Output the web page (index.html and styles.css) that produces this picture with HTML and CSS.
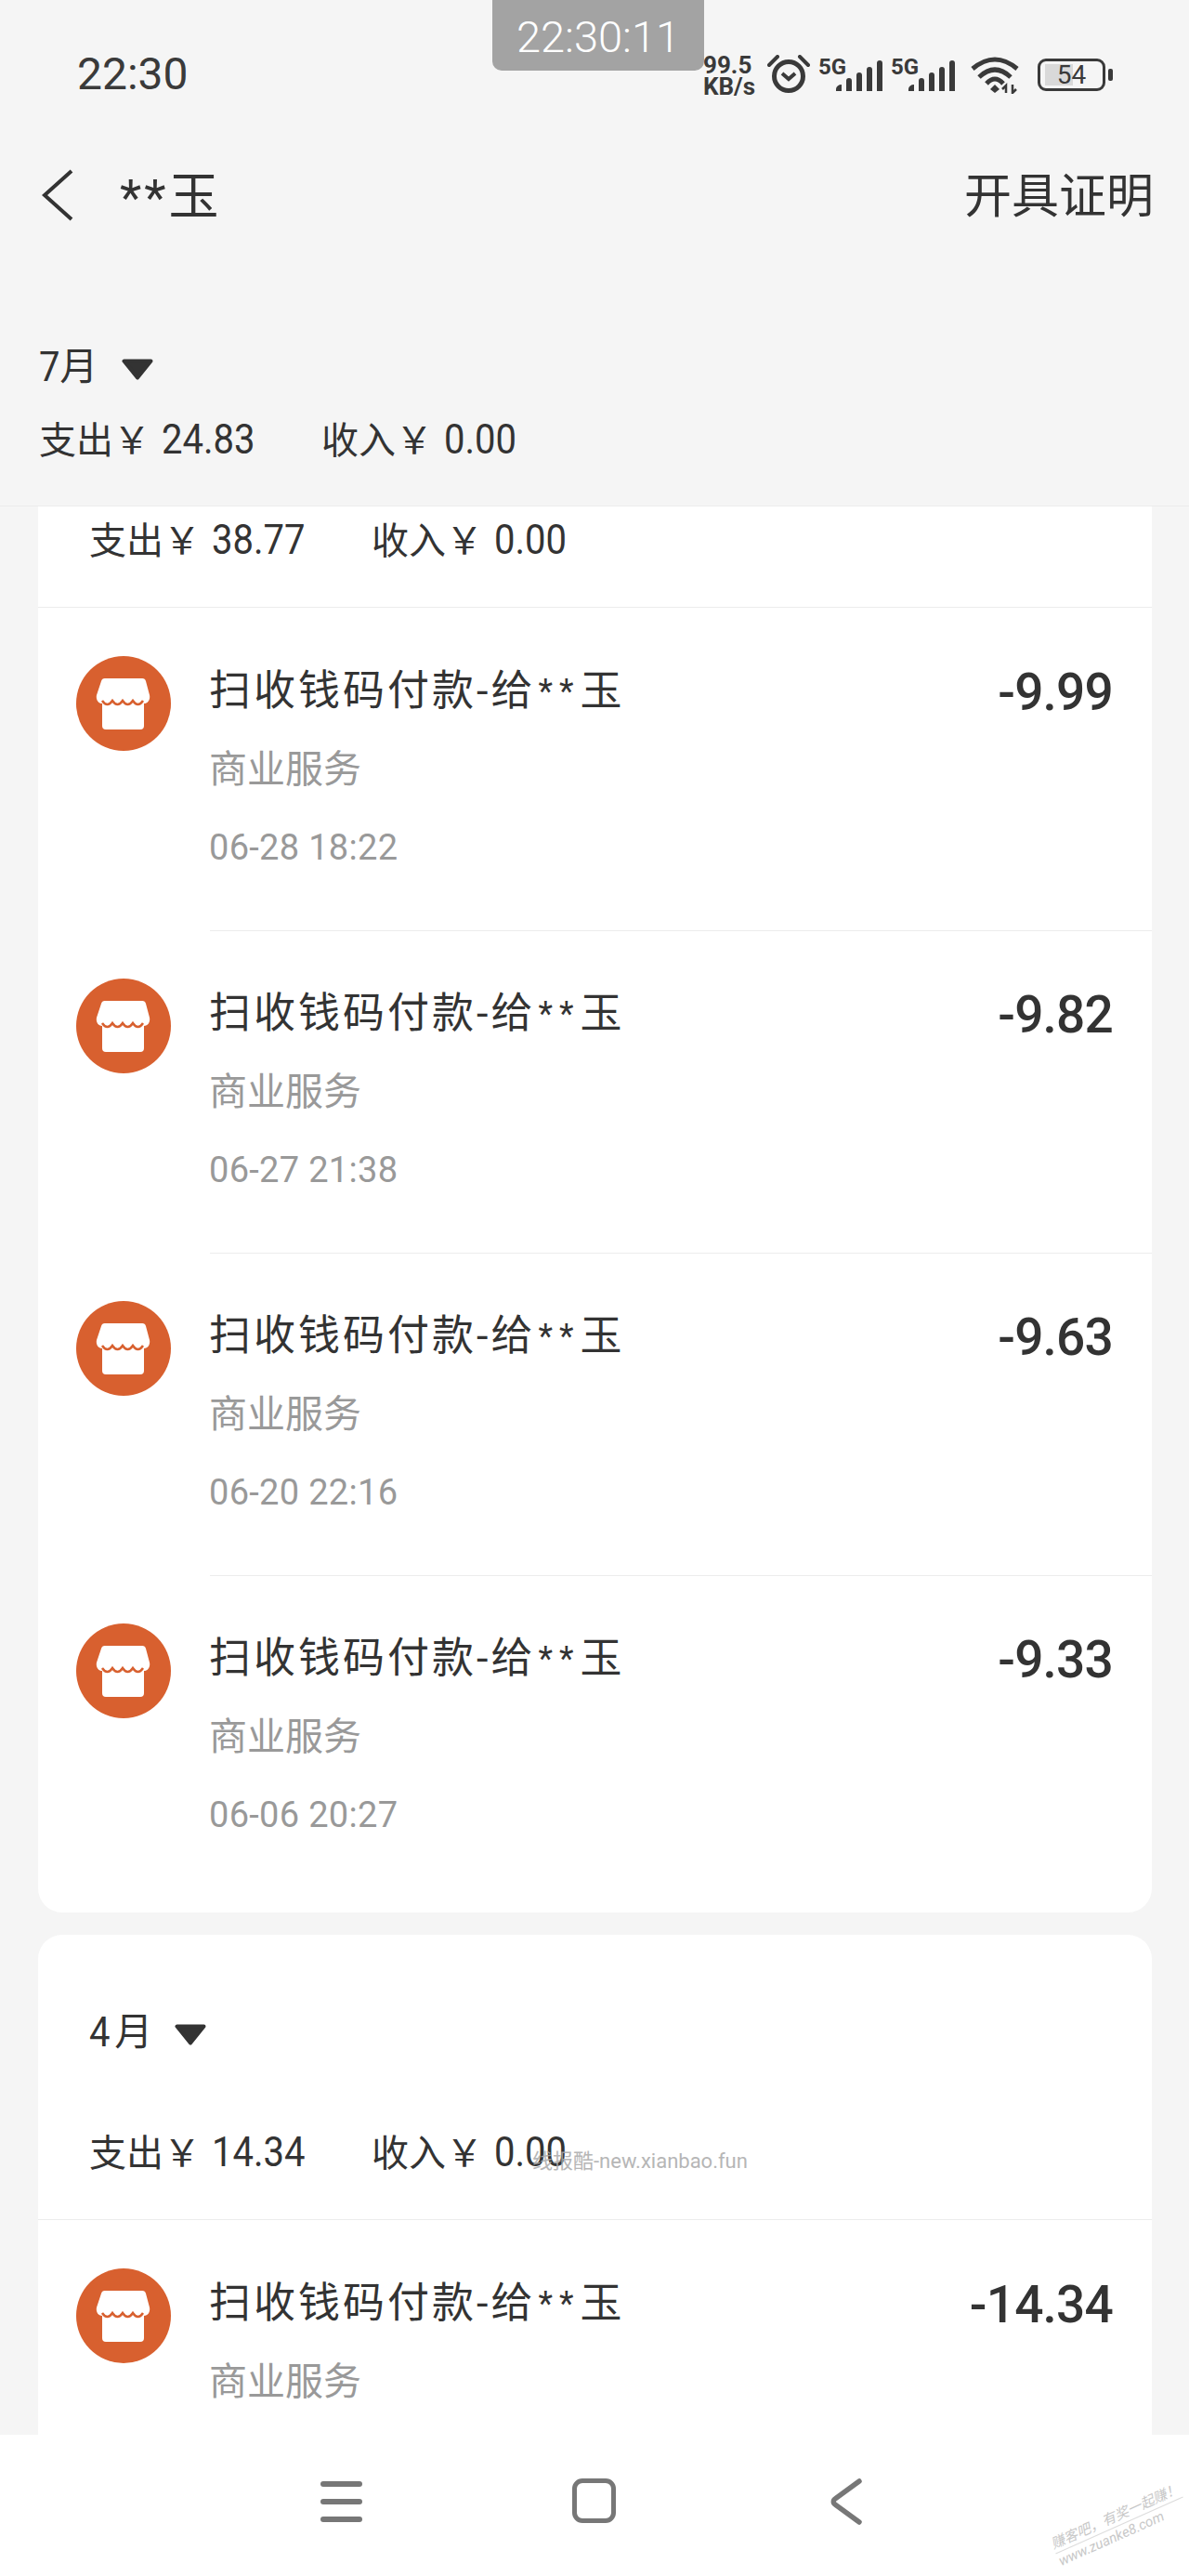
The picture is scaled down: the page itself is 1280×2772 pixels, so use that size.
FILE: index.html
```html
<!DOCTYPE html>
<html lang="zh-CN">
<head>
    <meta charset="UTF-8">
    <title>**玉</title>
    <link rel="stylesheet" href="styles.css">
</head>
<body>
<svg class="defs" width="0" height="0">
    <symbol id="shop" viewBox="0 0 102 102">
        <circle cx="51" cy="51" r="51" fill="#d8602f"/>
        <path d="M31 24H71a4 4 0 0 1 4 3l4 15c1 5-2 9-6 9v24a4 4 0 0 1-4 4H32a4 4 0 0 1-4-4V51c-4 0-7-4-6-9l5-15a4 4 0 0 1 4-3z" fill="#fff"/>
        <path d="M28 48q5.500 8 11 0q5.500 8 11 0q5.500 8 11 0q5.500 8 11 0" fill="none" stroke="#d8602f" stroke-width="2.500"/>
    </symbol>
    <symbol id="bars" viewBox="0 0 52 33">
        <path d="M1 33v-2a6 5 0 0 1 6-5v7zM12 33V22a3 3 0 0 1 6 0v11zM23 33V16a3 3 0 0 1 6 0v17zM34 33V10a3 3 0 0 1 6 0v23zM45 33V3a3 3 0 0 1 6 0v30z" fill="#3a3a3a"/>
    </symbol>
    <symbol id="tri" viewBox="0 0 34 23">
        <path d="M2.500 2.500h29L17 20.500z" fill="#333" stroke="#333" stroke-width="4" stroke-linejoin="round"/>
    </symbol>
</svg>
<div class="phone">
    <!-- status bar -->
    <div class="status">
        <span class="clock">22:30</span>
        <div class="status-icons">
            <div class="speed"><span>99.5</span><span>KB/s</span></div>
            <svg class="alarm" width="46" height="42" viewBox="0 0 46 42">
                <circle cx="23" cy="23" r="15.500" fill="none" stroke="#3a3a3a" stroke-width="5"/>
                <path d="M16 20l7 6 7-6" fill="none" stroke="#3a3a3a" stroke-width="4"/>
                <path d="M2 11L11 2M44 11L35 2" fill="none" stroke="#3a3a3a" stroke-width="4" stroke-linecap="round"/>
            </svg>
            <div class="net first-net">
                <span class="five-g">5G</span>
                <svg width="52" height="33"><use href="#bars"/></svg>
            </div>
            <div class="net">
                <span class="five-g">5G</span>
                <svg width="52" height="33"><use href="#bars"/></svg>
            </div>
            <svg class="wifi" width="56" height="42" viewBox="0 0 56 42">
                <path d="M3 15Q27-5 51 15M10 24Q27 8 44 24M18 31Q27 21 36 31" fill="none" stroke="#3a3a3a" stroke-width="5"/>
                <path d="M27 32l5 5-5 4-5-4z" fill="#3a3a3a"/>
                <path d="M39 41V33l-4 4M46 32v9l4-4" fill="none" stroke="#3a3a3a" stroke-width="2.500"/>
            </svg>
            <div class="battery">
                <div class="battery-box"><i class="battery-fill"></i><span>54</span></div>
                <i class="battery-nub"></i>
            </div>
        </div>
    </div>
    <div class="time-pill">22:30:11</div>

    <!-- title bar -->
    <div class="nav">
        <svg class="back" width="34" height="56" viewBox="0 0 34 56"><path d="M32 2L3 28l29 26" fill="none" stroke="#333" stroke-width="4"/></svg>
        <span class="title">**玉</span>
        <span class="cert">开具证明</span>
    </div>

    <!-- sticky month -->
    <div class="sticky-month">
        <div class="month"><span class="digit">7</span>月<svg class="tri" width="34" height="23"><use href="#tri"/></svg></div>
        <div class="summary"><span>支出<b>￥</b><span class="num">24.83</span></span><span>收入<b>￥</b><span class="num">0.00</span></span></div>
    </div>

    <div class="list">
        <div class="card card-cut">
            <div class="summary"><span>支出<b>￥</b><span class="num">38.77</span></span><span>收入<b>￥</b><span class="num">0.00</span></span></div>
            <div class="rows">
                <div class="row">
                    <svg class="shop" width="102" height="102"><use href="#shop"/></svg>
                    <div class="row-main">
                        <div class="row-title">扫收钱码付款-给<span class="stars">**</span>玉</div>
                        <div class="row-kind">商业服务</div>
                        <div class="row-date">06-28 18:22</div>
                    </div>
                    <div class="row-amount">-9.99</div>
                </div>
                <div class="row">
                    <svg class="shop" width="102" height="102"><use href="#shop"/></svg>
                    <div class="row-main">
                        <div class="row-title">扫收钱码付款-给<span class="stars">**</span>玉</div>
                        <div class="row-kind">商业服务</div>
                        <div class="row-date">06-27 21:38</div>
                    </div>
                    <div class="row-amount">-9.82</div>
                </div>
                <div class="row">
                    <svg class="shop" width="102" height="102"><use href="#shop"/></svg>
                    <div class="row-main">
                        <div class="row-title">扫收钱码付款-给<span class="stars">**</span>玉</div>
                        <div class="row-kind">商业服务</div>
                        <div class="row-date">06-20 22:16</div>
                    </div>
                    <div class="row-amount">-9.63</div>
                </div>
                <div class="row">
                    <svg class="shop" width="102" height="102"><use href="#shop"/></svg>
                    <div class="row-main">
                        <div class="row-title">扫收钱码付款-给<span class="stars">**</span>玉</div>
                        <div class="row-kind">商业服务</div>
                        <div class="row-date">06-06 20:27</div>
                    </div>
                    <div class="row-amount">-9.33</div>
                </div>
            </div>
        </div>

        <div class="card">
            <div class="month month-in"><span class="digit">4</span>月<svg class="tri" width="34" height="23"><use href="#tri"/></svg></div>
            <div class="summary"><span>支出<b>￥</b><span class="num">14.34</span></span><span>收入<b>￥</b><span class="num">0.00</span></span></div>
            <div class="rows">
                <div class="row">
                    <svg class="shop" width="102" height="102"><use href="#shop"/></svg>
                    <div class="row-main">
                        <div class="row-title">扫收钱码付款-给<span class="stars">**</span>玉</div>
                        <div class="row-kind">商业服务</div>
                    </div>
                    <div class="row-amount">-14.34</div>
                </div>
            </div>
        </div>
    </div>

    <!-- system nav -->
    <div class="sysnav">
        <div class="sys-menu"><i></i><i></i><i></i></div>
        <div class="sys-home"></div>
        <svg class="sys-back" width="34" height="50" viewBox="0 0 34 50"><path d="M31 3L5 22a3.500 3.500 0 0 0 0 6l26 19" fill="none" stroke="#777" stroke-width="5.500" stroke-linecap="round"/></svg>
    </div>

    <div class="mark-site">线报酷-new.xianbao.fun</div>
    <div class="mark-corner"><div class="mark-line">赚客吧，有奖一起赚！</div><div>www.zuanke8.com</div></div>
</div>
</body>
</html>
```

FILE: styles.css
```css
* {
    box-sizing: border-box;
}
body {
    margin: 0;
    font-family: Roboto, "Noto Sans CJK SC", sans-serif;
    color: #333;
}
i {
    display: block;
}
.defs {
    position: absolute;
}

.phone {
    position: relative;
    width: 1280px;
    height: 2772px;
    background: #f5f5f5;
    display: flex;
    flex-direction: column;
    overflow: hidden;
}

/* status bar */
.status {
    height: 110px;
    padding: 56px 82px 0 83px;
    display: flex;
    justify-content: space-between;
    color: #3a3a3a;
}
.clock {
    font-size: 48px;
    line-height: 48px;
}
.status-icons {
    display: flex;
    align-items: flex-start;
    margin-top: 3px;
}
.speed {
    width: 69px;
    display: flex;
    flex-direction: column;
    font-size: 26px;
    line-height: 23px;
    font-weight: 700;
}
.net {
    display: flex;
    width: 78px;
    position: relative;
    height: 42px;
}
.first-net {
    margin-left: 9px;
}
.five-g {
    font-size: 24px;
    line-height: 26px;
    font-weight: 700;
}
.net svg {
    position: absolute;
    left: 18px;
    top: 6px;
}
.wifi {
    margin-left: 7px;
}
.battery {
    display: flex;
    align-items: center;
    margin-left: 17px;
    margin-top: 4px;
}
.battery-box {
    position: relative;
    width: 73px;
    height: 35px;
    border: 3px solid #3a3a3a;
    border-radius: 9px;
    text-align: center;
    font-size: 28px;
    line-height: 29px;
}
.battery-box span {
    position: relative;
}
.battery-fill {
    position: absolute;
    left: 5px;
    top: 3px;
    bottom: 3px;
    width: 30px;
    background: #d9d9d9;
}
.battery-nub {
    width: 5px;
    height: 13px;
    margin-left: 3px;
    background: #3a3a3a;
    border-radius: 2px;
}
.time-pill {
    position: absolute;
    left: 530px;
    top: 0;
    width: 228px;
    height: 76px;
    background: #a3a3a3;
    border-radius: 0 0 10px 10px;
    color: #fff;
    text-align: center;
    font-size: 47px;
    font-weight: 300;
    line-height: 80px;
}

/* title bar */
.nav {
    height: 150px;
    margin-top: 25px;
    padding: 0 38px 0 45px;
    display: flex;
    align-items: center;
}
.title {
    margin: 0 0 6px 50px;
    font-size: 54px;
    letter-spacing: 3px;
}
.cert {
    margin: 0 0 6px auto;
    font-size: 51px;
}

/* month */
.sticky-month {
    height: 260px;
    padding: 82px 0 0 42px;
    border-bottom: 1px solid #ececec;
}
.month {
    display: flex;
    align-items: center;
    font-size: 41px;
    line-height: 56px;
}
/* the digits in the month heads are narrower than Roboto */
.num,
.digit {
    display: inline-block;
    font-size: 45px;
    transform: scaleX(.89);
    transform-origin: 0 50%;
}
.num {
    margin-right: -12px;
}
.digit {
    margin-right: -3px;
}
.tri {
    margin: 4px 0 0 26px;
}
.summary {
    display: flex;
    gap: 71px;
    font-size: 40px;
    line-height: 56px;
    margin-top: 22px;
}
.summary b {
    font-weight: 400;
    margin-right: 12px;
}

/* list */
.list {
    flex: 1;
    padding: 0 40px 0 41px;
    overflow: hidden;
    display: flex;
    flex-direction: column;
    gap: 24px;
}
.card {
    background: #fff;
    border-radius: 26px;
    padding-top: 77px;
}
.card-cut {
    border-radius: 0 0 26px 26px;
    padding-top: 0;
}
.card .summary {
    margin: 73px 0 0 55px;
    height: 100px;
}
.card-cut .summary {
    margin-top: 8px;
    height: 100px;
}
.month-in {
    margin-left: 55px;
}
.month-in .digit {
    margin-right: 2px;
}
.month-in .tri {
    margin-left: 24px;
}
.rows {
    border-top: 1px solid #ececec;
    padding-bottom: 16px;
}
.row {
    display: flex;
    align-items: flex-start;
    height: 347px;
    padding: 52px 42px 0 41px;
}
.row + .row {
    background: linear-gradient(#ececec, #ececec) 185px 0 / 100% 1px no-repeat;
}
.row-main {
    flex: 1;
    margin: 7px 0 0 41px;
}
.row-title {
    font-size: 45px;
    line-height: 62px;
    letter-spacing: 3px;
}
.stars {
    font-size: 36px;
    letter-spacing: 7px;
    margin-left: 3px;
    position: relative;
    top: -3px;
}
.row-kind {
    margin-top: 22px;
    font-size: 41px;
    line-height: 56px;
    color: #999;
}
.row-date {
    margin-top: 31px;
    font-size: 38px;
    line-height: 50px;
    letter-spacing: .3px;
    color: #999;
}
.row-amount {
    font-size: 55px;
    line-height: 62px;
    font-weight: 500;
    letter-spacing: -.8px;
    margin-top: 8px;
}

/* system nav */
.sysnav {
    height: 152px;
    background: #fff;
    position: relative;
    flex-shrink: 0;
    display: flex;
    padding: 47px 0 0 345px;
    align-items: flex-start;
}
.sys-menu {
    width: 45px;
    height: 44px;
    margin-top: 3px;
    display: flex;
    flex-direction: column;
    justify-content: space-between;
}
.sys-menu i {
    height: 6px;
    background: #777;
    border-radius: 3px;
}
.sys-home {
    width: 47px;
    height: 48px;
    margin-left: 226px;
    border: 5px solid #777;
    border-radius: 11px;
}
.sys-back {
    margin: 0 0 0 231px;
}

/* watermarks */
.mark-site {
    position: absolute;
    left: 573px;
    top: 2313px;
    font-size: 22px;
    line-height: 26px;
    color: #aaa;
    opacity: .85;
}
.mark-corner {
    position: absolute;
    left: 1130px;
    top: 2698px;
    font-size: 15px;
    line-height: 19px;
    font-style: italic;
    color: #c8c8c8;
    transform: rotate(-24deg);
}
.mark-line {
    border-bottom: 1px solid #ddd;
}
```
